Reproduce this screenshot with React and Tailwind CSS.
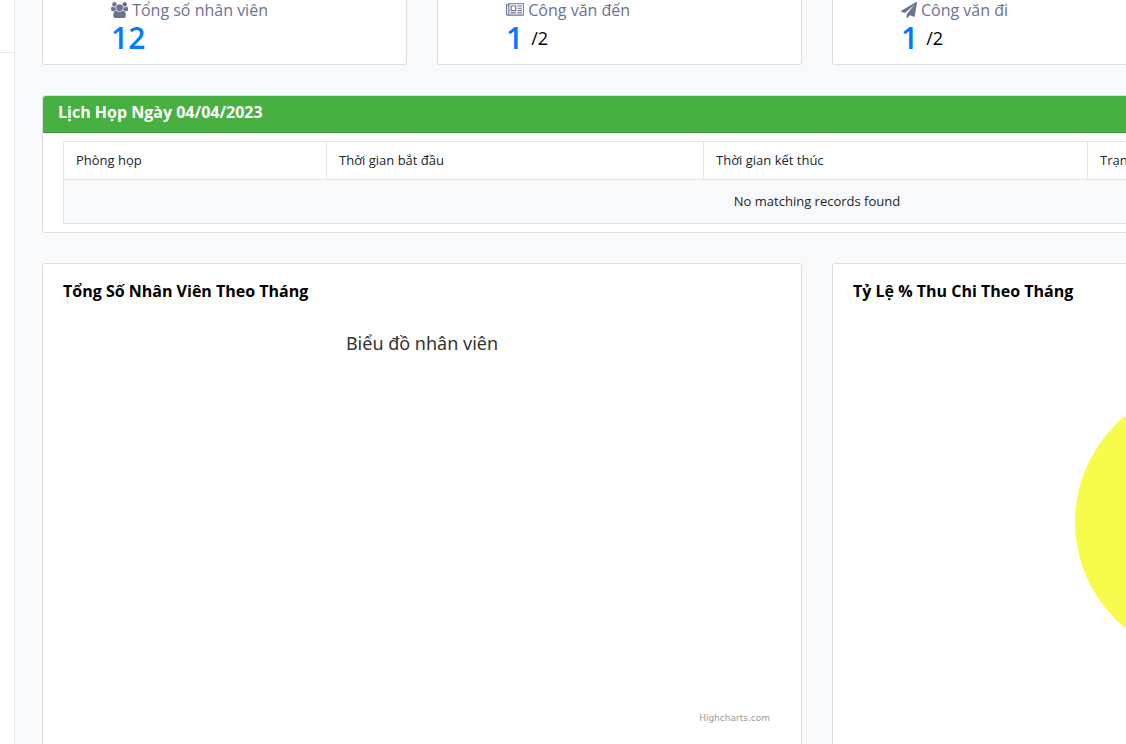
import React from "react";

const iconProps = { fill: "currentColor", "aria-hidden": true, className: "h-4 w-auto shrink-0" };

function UsersIcon() {
  return (
    <svg viewBox="0 0 1920 1792" {...iconProps}>
      <path d="M593 896q-162 5-265 128h-134q-82 0-138-40.500t-56-118.500q0-353 124-353 6 0 43.500 21t97.500 42.500 119 21.500q67 0 133-23-5 37-5 66 0 139 81 256zM1664 1533q0 120-73 189.500t-194 69.500h-874q-121 0-194-69.500t-73-189.500q0-53 3.500-103.500t14-109 26.500-108.500 43-97.500 62-81 85.500-53.500 111.500-20q10 0 43 21.500t73 48 107 48 135 21.500 135-21.500 107-48 73-48 43-21.500q61 0 111.500 20t85.500 53.500 62 81 43 97.500 26.500 108.500 14 109 3.500 103.500zM640 256q0 106-75 181t-181 75-181-75-75-181 75-181 181-75 181 75 75 181zM1344 640q0 159-112.500 271.500t-271.500 112.500-271.500-112.500-112.500-271.500 112.500-271.500 271.500-112.500 271.500 112.500 112.500 271.500zM1920 865q0 78-56 118.500t-138 40.500h-134q-103-123-265-128 81-117 81-256 0-29-5-66 66 23 133 23 59 0 119-21.500t97.500-42.500 43.500-21q124 0 124 353zM1792 256q0 106-75 181t-181 75-181-75-75-181 75-181 181-75 181 75 75 181z" />
    </svg>
  );
}

function NewspaperIcon() {
  return (
    <svg viewBox="0 0 2048 1792" {...iconProps}>
      <path d="M1024 512h-384v384h384v-384zM1152 1152v128h-640v-128h640zM1152 384v640h-640v-640h640zM1792 1152v128h-512v-128h512zM1792 896v128h-512v-128h512zM1792 640v128h-512v-128h512zM1792 384v128h-512v-128h512zM256 1344v-960h-128v960q0 26 19 45t45 19 45-19 19-45zM1920 1344v-1088h-1536v1088q0 33-11 64h1483q26 0 45-19t19-45zM2048 128v1216q0 80-56 136t-136 56h-1664q-80 0-136-56t-56-136v-1088h256v-128h1792z" />
    </svg>
  );
}

function PlaneIcon() {
  return (
    <svg viewBox="0 0 1792 1792" {...iconProps}>
      <path d="M1764 11q33 24 27 64l-256 1536q-5 29-32 45-14 8-31 8-11 0-24-5l-453-185-242 295q-18 23-49 23-13 0-22-4-19-7-30.500-23.500t-11.500-36.500v-349l864-1059-1069 925-395-162q-37-14-40-55-2-40 32-59l1664-960q15-9 32-9 20 0 36 11z" />
    </svg>
  );
}

const stats = [
  { Icon: UsersIcon, label: "Tổng số nhân viên", value: "12" },
  { Icon: NewspaperIcon, label: "Công văn đến", value: "1", total: "/2" },
  { Icon: PlaneIcon, label: "Công văn đi", value: "1", total: "/2" },
];

function StatCard({ Icon, label, value, total }) {
  return (
    <section className="h-[65px] rounded-b-[3px] border border-t-0 border-[#dcdfe1] bg-white pl-[68px]">
      <div className="flex h-5 items-center gap-1 text-base text-[#6c7293]">
        <Icon />
        <span>{label}</span>
      </div>
      <div className="flex h-9 items-center gap-2">
        <strong className="text-3xl font-semibold text-[#007bff]">{value}</strong>
        {total && <span className="text-lg text-black">{total}</span>}
      </div>
    </section>
  );
}

function ChartCard({ title, children }) {
  return (
    <section className="h-[560px] rounded-[3px] border border-[#dcdfe1] bg-white px-5 pt-[15px]">
      <h2 className="text-base font-bold text-black">{title}</h2>
      {children}
    </section>
  );
}

export default function App() {
  return (
    <div className="flex h-screen overflow-hidden bg-[#f8f9fb] font-['Open_Sans','Noto_Sans',sans-serif]">
      <aside className="w-[15px] shrink-0 border-r border-[#e4e7eb] bg-white">
        <div className="h-[53px] border-b border-[#e4e7eb]" />
      </aside>
      <main className="ml-[27px] min-w-[1550px] flex-1">
        <div className="grid grid-cols-4 gap-[30px]">
          {stats.map((s) => (
            <StatCard key={s.label} {...s} />
          ))}
        </div>

        <section className="mt-[30px] rounded-[3px] border border-[#dcdfe1] bg-white">
          <h2 className="h-[37px] rounded-t-[3px] border-b border-[#359a35] bg-[#48b040] px-[15px] text-base leading-8 font-bold text-white">
            Lịch Họp Ngày 04/04/2023
          </h2>
          <div className="px-5 py-2">
            <table className="w-full table-fixed border-collapse text-[13px] text-[#212529]">
              <colgroup>
                <col className="w-[263px]" />
                <col className="w-[377px]" />
                <col className="w-[384px]" />
                <col />
              </colgroup>
              <thead>
                <tr className="h-[38px]">
                  {["Phòng họp", "Thời gian bắt đầu", "Thời gian kết thúc", "Trạng thái"].map((h) => (
                    <th key={h} scope="col" className="border border-[#e2e5ec] px-3 text-left font-normal">
                      {h}
                    </th>
                  ))}
                </tr>
              </thead>
              <tbody>
                <tr className="h-11 bg-[#f8f9fb]">
                  <td colSpan={4} className="border border-[#e2e5ec] pt-px text-center">
                    No matching records found
                  </td>
                </tr>
              </tbody>
            </table>
          </div>
        </section>

        <div className="mt-[30px] grid grid-cols-2 gap-[30px]">
          <ChartCard title="Tổng Số Nhân Viên Theo Tháng">
            <div className="mt-[26px] flex h-[396px] flex-col justify-between font-['Noto_Sans',sans-serif]">
              <h3 className="text-center text-lg text-[#333333]">Biểu đồ nhân viên</h3>
              <a href="#highcharts" className="self-end pr-[11px] font-['DejaVu_Sans',sans-serif] text-[9px] text-[#999999]">
                Highcharts.com
              </a>
            </div>
          </ChartCard>
          <ChartCard title="Tỷ Lệ % Thu Chi Theo Tháng">
            <svg viewBox="0 0 274 274" className="mx-auto mt-[82px] size-[274px]" role="img">
              <circle cx="137" cy="137" r="137" fill="#f7fb4b" />
            </svg>
          </ChartCard>
        </div>
      </main>
    </div>
  );
}
